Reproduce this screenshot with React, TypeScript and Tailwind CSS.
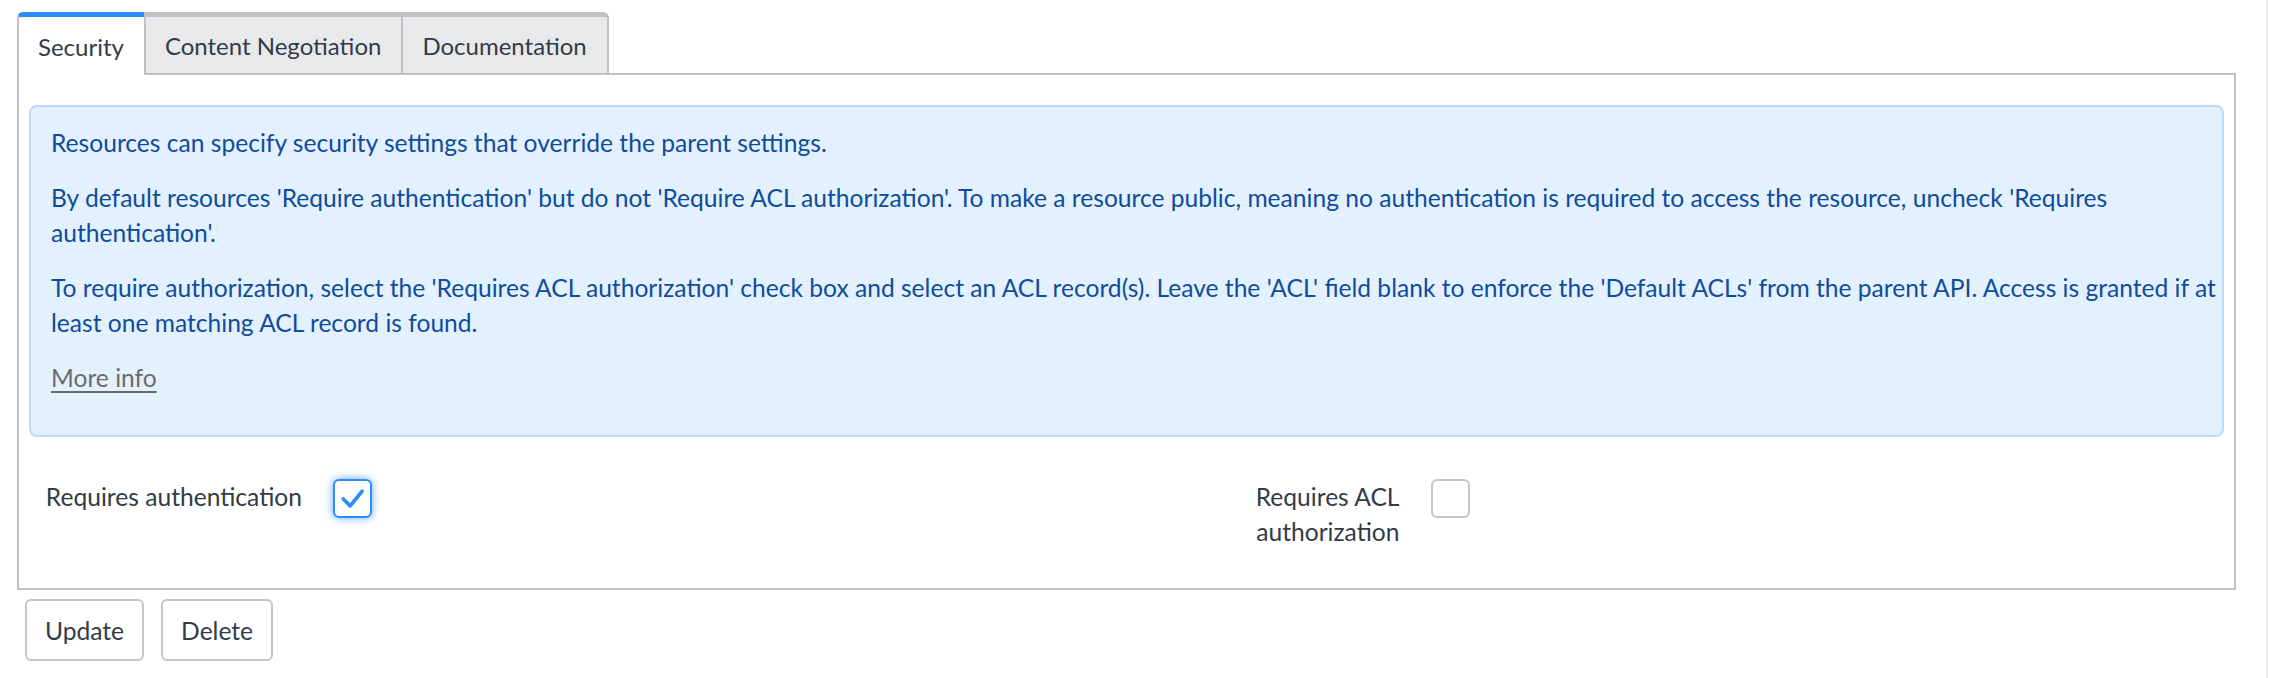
import React from "react";

const tabs = ["Security", "Content Negotiation", "Documentation"];

function Checkbox({ checked }: { checked: boolean }) {
  if (checked) {
    return (
      <span className="flex h-[39px] w-[39px] shrink-0 items-center justify-center rounded-[6px] border-2 border-[#2d8cfb] bg-white shadow-[0_0_8px_rgba(45,140,251,0.75)]">
        <svg viewBox="0 0 38 38" className="h-[35px] w-[35px]">
          <polyline
            points="9,19.5 16.5,27 29.5,11"
            fill="none"
            stroke="#2d8cfb"
            strokeWidth="4"
            strokeLinecap="round"
            strokeLinejoin="round"
          />
        </svg>
      </span>
    );
  }
  return <span className="block h-[39px] w-[39px] shrink-0 rounded-[6px] border-2 border-[#c5c7cb] bg-white" />;
}

export default function App() {
  return (
    <div
      className="flex h-[678px] bg-white text-[24.6px] leading-[35px] text-[#333b47]"
      style={{ fontFamily: "Lato, 'Liberation Sans', sans-serif" }}
    >
      <div className="w-[2236px] shrink-0 pl-[17px] pt-[12px]">
        {/* tab strip */}
        <div className="flex items-end text-[24px]">
          <div className="flex h-[63px] items-center rounded-tl-[6px] border-l-2 border-t-[5px] border-l-[#bfc1c5] border-t-[#2b8cfd] bg-white pl-[19px] pr-[20px]">
            {tabs[0]}
          </div>
          <div className="flex h-[63px] items-center border-b-2 border-l-2 border-t-[5px] border-[#bfc1c5] bg-[#e8e9eb] pl-[19px] pr-[20px]">
            {tabs[1]}
          </div>
          <div className="flex h-[63px] items-center rounded-tr-[6px] border-x-2 border-b-2 border-t-[5px] border-[#bfc1c5] bg-[#e8e9eb] pl-[19px] pr-[20px]">
            {tabs[2]}
          </div>
          <div className="flex-1 border-b-2 border-[#bfc1c5]" />
        </div>

        {/* panel */}
        <div className="border-x-2 border-b-2 border-[#bfc1c5] px-[10px] pb-[39px] pt-[30px]">
          <div className="rounded-[8px] border-2 border-[#bcdcfb] bg-[#e3f0fd] pb-[20px] pl-[20px] pr-[4px] pt-[18px] text-[#0f4c9c]">
            <p className="mb-[20px]">Resources can specify security settings that override the parent settings.</p>
            <p className="mb-[20px]">
              By default resources 'Require authentication' but do not 'Require ACL authorization'. To make a resource
              public, meaning no authentication is required to access the resource, uncheck 'Requires authentication'.
            </p>
            <p className="mb-[20px]">
              To require authorization, select the 'Requires ACL authorization' check box and select an ACL record(s).
              Leave the 'ACL' field blank to enforce the 'Default ACLs' from the parent API. Access is granted if at
              least one matching ACL record is found.
            </p>
            <p className="mb-[20px]">
              <a href="#" className="text-[#6b6b6b] underline decoration-[1.5px] underline-offset-[4px]">
                More info
              </a>
            </p>
          </div>

          <div className="mt-[42px] grid grid-cols-2">
            <div className="flex items-start">
              <label className="w-[304px] shrink-0 whitespace-nowrap pl-[14px] pr-[31px] text-right">
                Requires authentication
              </label>
              <Checkbox checked />
            </div>
            <div className="flex items-start">
              <label className="w-[304px] shrink-0 pl-[14px] pr-[31px] text-right">Requires ACL authorization</label>
              <Checkbox checked={false} />
            </div>
          </div>
        </div>

        {/* actions */}
        <div className="ml-[8px] mt-[9px] flex gap-[17px]">
          <button className="h-[62px] rounded-[6px] border-2 border-[#c3c5c9] bg-white px-[18px] text-[#333b47]">
            Update
          </button>
          <button className="h-[62px] rounded-[6px] border-2 border-[#c3c5c9] bg-white px-[18px] text-[#333b47]">
            Delete
          </button>
        </div>
      </div>
      <div className="flex-1" />
      <div className="w-[2px] bg-[#ebebeb]" />
      <div className="w-[2px]" />
    </div>
  );
}
